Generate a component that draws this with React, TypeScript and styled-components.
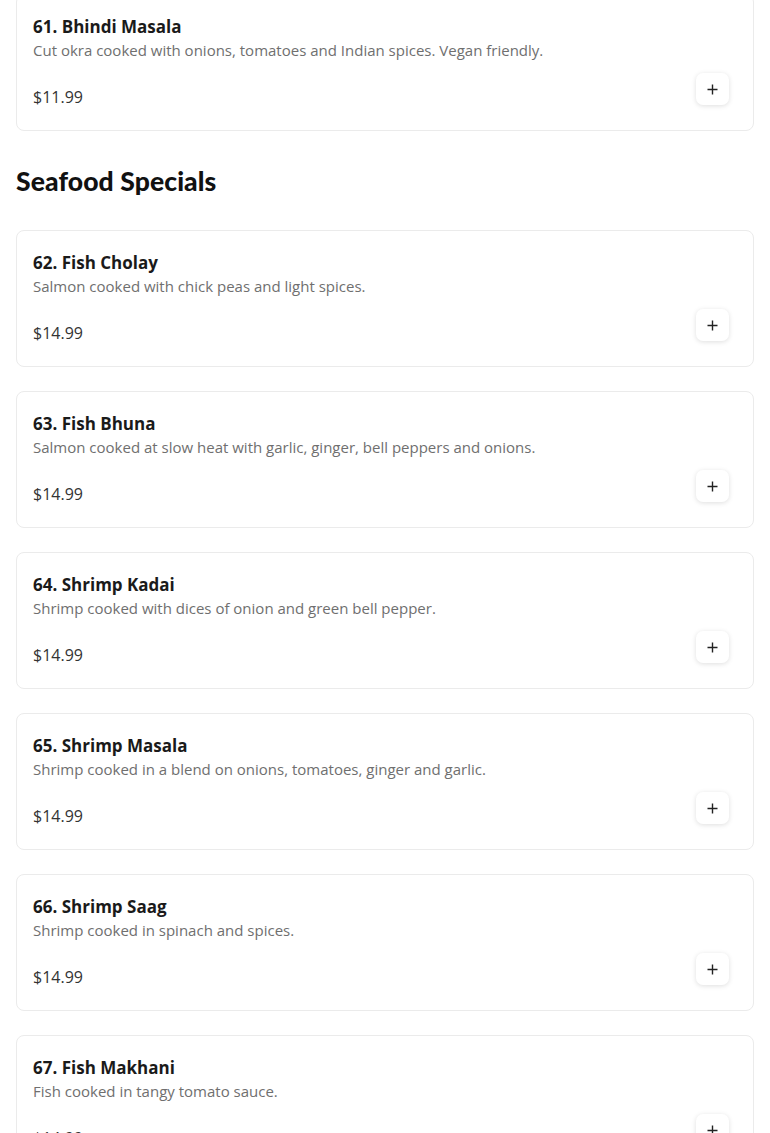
import React from "react";
import styled, { createGlobalStyle } from "styled-components";

const Global = createGlobalStyle`
  html, body { margin: 0; padding: 0; background: #fff; }
  body { font-family: "Open Sans", "Liberation Sans", sans-serif; overflow: hidden; }
`;

const Page = styled.main`
  padding: 0 16px;
  margin-top: -6px;
`;

const List = styled.div`
  display: flex;
  flex-direction: column;
  gap: 24px;
`;

const SectionTitle = styled.h2`
  margin: 32px 0 31px;
  font-family: "Lato", "Liberation Sans", sans-serif;
  font-weight: 900;
  font-size: 26.5px;
  line-height: 36px;
  color: #111;
  letter-spacing: 0.1px;
`;

const Card = styled.article`
  border: 1px solid #ebebeb;
  border-radius: 8px;
  padding: 20px 24px 21px 16px;
  background: #fff;
  display: flex;
  flex-direction: column;
`;

const Title = styled.h3`
  margin: 0;
  font-size: 17px;
  line-height: 24px;
  font-weight: 700;
  color: #1a1a1a;
`;

const Desc = styled.p`
  margin: 0;
  font-size: 15px;
  line-height: 22px;
  color: #6f6f6f;
`;

const Footer = styled.div`
  margin-top: 12px;
  display: flex;
  justify-content: space-between;
  align-items: flex-start;
`;

const Price = styled.span`
  padding-top: 12px;
  font-size: 16px;
  line-height: 24px;
  color: #333;
`;

const AddButton = styled.button`
  width: 33px;
  height: 32px;
  border: none;
  border-radius: 7px;
  background: #fff;
  box-shadow: 0 1px 5px rgba(0, 0, 0, 0.13);
  display: flex;
  align-items: center;
  justify-content: center;
  padding: 0;
  cursor: pointer;
`;

const Plus = () => (
  <svg width="11" height="11" viewBox="0 0 11 11" fill="none">
    <path d="M5.5 0.5v10M0.5 5.5h10" stroke="#222" strokeWidth="1.4" />
  </svg>
);

type Item = { name: string; desc: string; price: string };

const Dish = ({ item }: { item: Item }) => (
  <Card>
    <Title>{item.name}</Title>
    <Desc>{item.desc}</Desc>
    <Footer>
      <Price>{item.price}</Price>
      <AddButton aria-label="Add">
        <Plus />
      </AddButton>
    </Footer>
  </Card>
);

const seafood: Item[] = [
  { name: "62. Fish Cholay", desc: "Salmon cooked with chick peas and light spices.", price: "$14.99" },
  { name: "63. Fish Bhuna", desc: "Salmon cooked at slow heat with garlic, ginger, bell peppers and onions.", price: "$14.99" },
  { name: "64. Shrimp Kadai", desc: "Shrimp cooked with dices of onion and green bell pepper.", price: "$14.99" },
  { name: "65. Shrimp Masala", desc: "Shrimp cooked in a blend on onions, tomatoes, ginger and garlic.", price: "$14.99" },
  { name: "66. Shrimp Saag", desc: "Shrimp cooked in spinach and spices.", price: "$14.99" },
  { name: "67. Fish Makhani", desc: "Fish cooked in tangy tomato sauce.", price: "$14.99" },
];

export default function App() {
  return (
    <>
      <Global />
      <Page>
        <List>
          <Dish
            item={{
              name: "61. Bhindi Masala",
              desc: "Cut okra cooked with onions, tomatoes and Indian spices. Vegan friendly.",
              price: "$11.99",
            }}
          />
        </List>
        <SectionTitle>Seafood Specials</SectionTitle>
        <List>
          {seafood.map((it) => (
            <Dish key={it.name} item={it} />
          ))}
        </List>
      </Page>
    </>
  );
}
